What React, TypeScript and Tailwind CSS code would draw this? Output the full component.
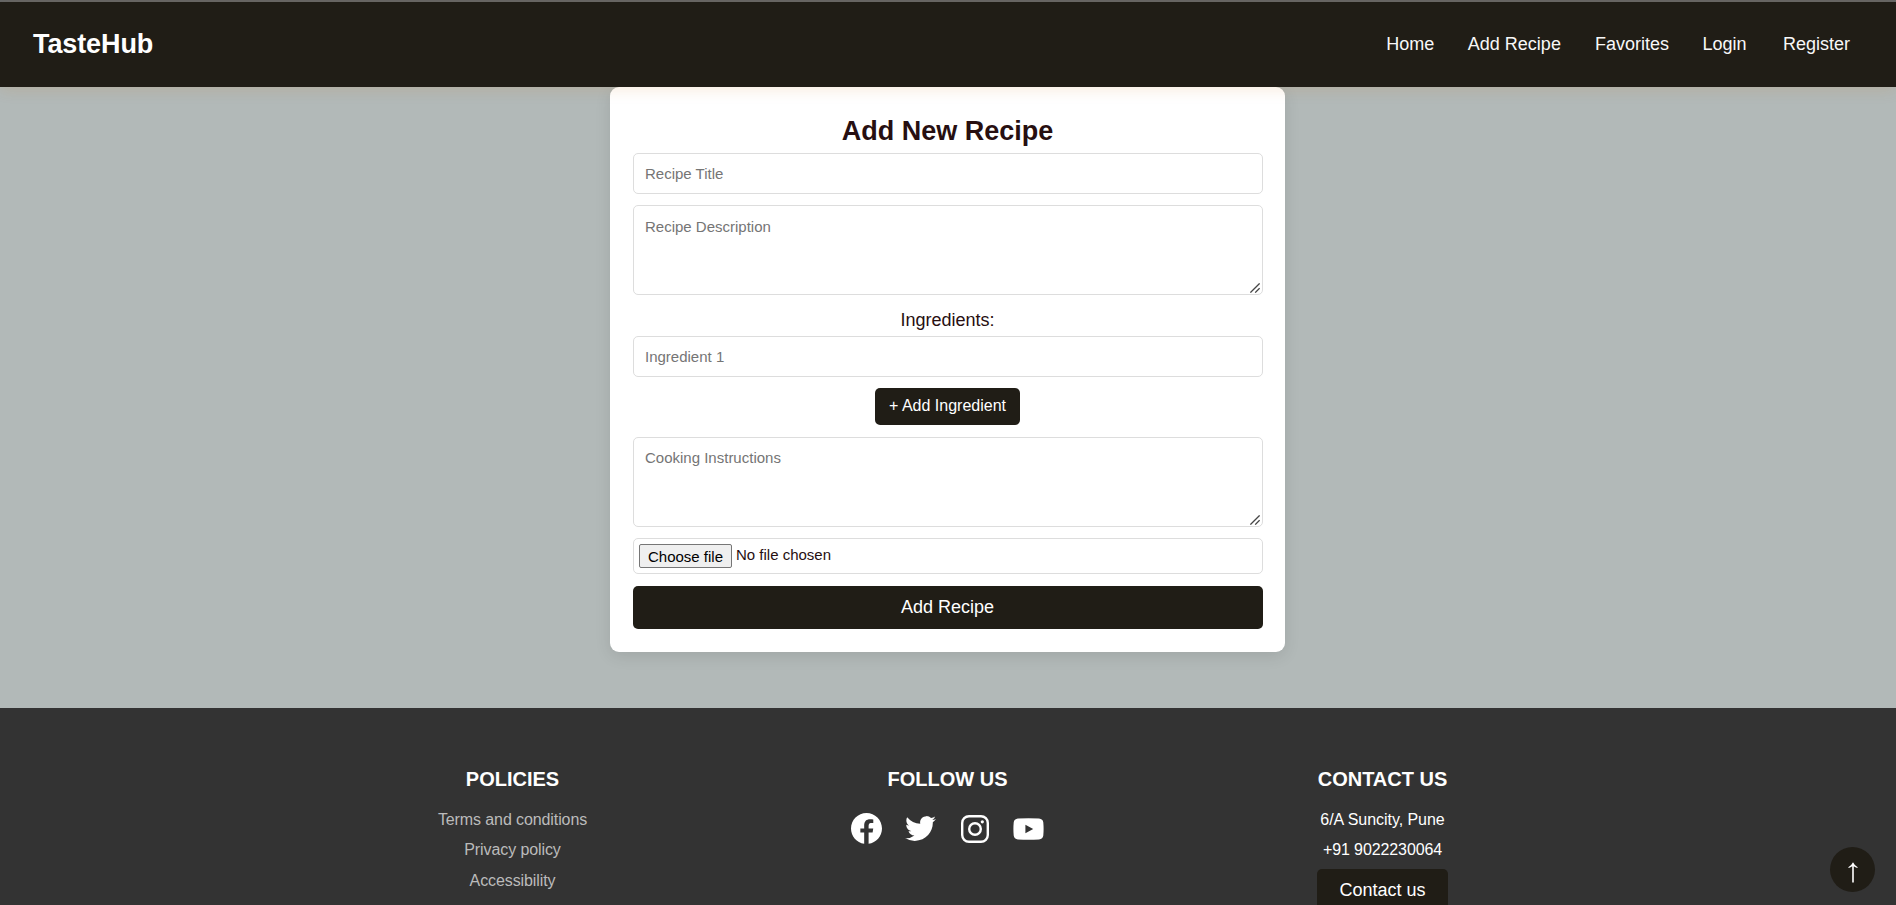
import React from "react";
import { IoLogoTwitter } from "react-icons/io5";

const field =
  "block w-full shrink-0 rounded-[5px] border border-[#dddddd] bg-white px-[11px] text-[15px] leading-[17px] text-[#270f11] placeholder:text-[#757575] outline-none";

function Header() {
  return (
    <header className="relative z-10 flex h-[85px] shrink-0 items-center justify-between bg-[#201d16] pr-[46px] pl-[33px] text-white shadow-[0_3px_14px_rgba(200,110,0,0.13)]">
      <div className="text-[27px] leading-[31px] font-bold tracking-[-0.1px]">TasteHub</div>
      <nav className="flex pb-px text-[18px] leading-[21px] text-[#f8f8f8]">
        <a className="mr-[33.5px]">Home</a>
        <a className="mr-[34px]">Add Recipe</a>
        <a className="mr-[33.5px]">Favorites</a>
        <a className="mr-[36.5px]">Login</a>
        <a>Register</a>
      </nav>
    </header>
  );
}

function TextBox({ placeholder, padding }: { placeholder: string; padding: string }) {
  return (
    <div className="relative w-full">
      <textarea
        className={`${field} h-[90px] resize-none ${padding}`}
        placeholder={placeholder}
      />
      <svg
        className="absolute right-[3px] bottom-[2px] size-[10px]"
        viewBox="0 0 10 10"
        fill="none"
        stroke="#454545"
        strokeWidth="1.3"
      >
        <path d="M0.4 9.6 9.6 0.4M5.2 9.6 9.6 5.2" />
      </svg>
    </div>
  );
}

function RecipeForm() {
  return (
    <form className="mx-auto flex h-[565px] w-[675px] flex-col items-center rounded-[9px] bg-white pt-[29px] pr-[22px] pl-[23px] text-[#270f11] shadow-[0_4px_16px_rgba(0,0,0,0.1)]">
      <h2 className="mr-px text-[27px] leading-[31px] font-bold">Add New Recipe</h2>
      <input className={`${field} mt-[6px] h-[41px]`} placeholder="Recipe Title" />
      <div className="mt-[11px] w-full">
        <TextBox placeholder="Recipe Description" padding="py-[12px]" />
      </div>
      <h3 className="mt-[15px] mr-px text-[18px] leading-[21px]">Ingredients:</h3>
      <input className={`${field} mt-[5px] h-[41px]`} placeholder="Ingredient 1" />
      <button
        type="button"
        className="mt-[11px] mr-px h-[37px] w-[145px] shrink-0 rounded-[5px] bg-[#201d16] pb-px text-[16px] text-white"
      >
        + Add Ingredient
      </button>
      <div className="mt-[12px] w-full">
        <TextBox placeholder="Cooking Instructions" padding="py-[11px]" />
      </div>
      <div className="mt-[11px] flex h-[36px] w-full shrink-0 items-center rounded-[5px] border border-[#dddddd] pl-[5px] text-[15px]">
        <button
          type="button"
          className="mr-[4px] h-[24px] w-[93px] rounded-[2px] border border-[#767676] bg-[#efefef] pt-px leading-[20px] text-black"
        >
          Choose file
        </button>
        <span className="pb-px">No file chosen</span>
      </div>
      <button
        type="button"
        className="mt-[12px] h-[43px] w-full shrink-0 rounded-[5px] bg-[#201d16] pr-px pb-px text-[18px] text-white"
      >
        Add Recipe
      </button>
    </form>
  );
}

function FacebookIcon() {
  return (
    <svg className="size-[31px]" viewBox="3 3 44 44" fill="currentColor">
      <path d="M25 3C12.85 3 3 12.85 3 25c0 11.03 8.125 20.137 18.712 21.728V30.831h-5.443v-5.783h5.443v-3.848c0-6.371 3.104-9.168 8.399-9.168 2.536 0 3.877.188 4.512.274v5.048h-3.612c-2.248 0-3.033 2.131-3.033 4.533v3.161h6.588l-.894 5.783h-5.694v15.944C38.716 45.318 47 36.137 47 25 47 12.85 37.15 3 25 3z" />
    </svg>
  );
}

function InstagramIcon() {
  return (
    <svg className="size-[28px]" viewBox="0 0 28 28" fill="none" stroke="currentColor" strokeWidth="2.4">
      <rect x="1.2" y="1.2" width="25.6" height="25.6" rx="6.8" />
      <circle cx="14" cy="14" r="5.8" />
      <circle cx="21.3" cy="6.8" r="1.6" fill="currentColor" stroke="none" />
    </svg>
  );
}

function YoutubeIcon() {
  return (
    <svg className="h-[22px] w-[31px]" viewBox="0 0 31 22" fill="currentColor" fillRule="evenodd">
      <path d="M5 .6Q15.5-.2 26 .6 29.9 1 30.3 4.5 30.9 11 30.3 17.5 29.9 21 26 21.4 15.5 22.2 5 21.4 1.1 21 .7 17.5.1 11 .7 4.5 1.1 1 5 .6ZM12.4 6.8V15.2L20.2 11Z" />
    </svg>
  );
}

function Footer() {
  return (
    <footer className="flex h-[197px] shrink-0 justify-center overflow-hidden bg-[#333333] pt-[60px] pr-px text-[16px] leading-[18px] text-white">
      <section className="flex w-[435px] flex-col items-center">
        <h3 className="text-[20px] leading-[23px] font-bold">POLICIES</h3>
        <div className="mt-[20px] flex flex-col items-center tracking-[-0.1px] text-[#bbbbbb]">
          <a>Terms and conditions</a>
          <a className="mt-[12px]">Privacy policy</a>
          <a className="mt-[13px]">Accessibility</a>
        </div>
      </section>
      <section className="flex w-[435px] flex-col items-center">
        <h3 className="text-[20px] leading-[23px] font-bold">FOLLOW US</h3>
        <div className="mt-[22px] flex h-[31px] items-center">
          <div className="flex w-[54px] justify-center"><FacebookIcon /></div>
          <div className="flex w-[54px] justify-center"><IoLogoTwitter className="size-[33px]" /></div>
          <div className="flex w-[54px] justify-center"><InstagramIcon /></div>
          <div className="flex w-[54px] justify-center"><YoutubeIcon /></div>
        </div>
      </section>
      <section className="flex w-[435px] flex-col items-center">
        <h3 className="text-[20px] leading-[23px] font-bold">CONTACT US</h3>
        <p className="mt-[20px] tracking-[-0.05px]">6/A Suncity, Pune</p>
        <p className="mt-[12px] tracking-[-0.1px]">+91 9022230064</p>
        <button
          type="button"
          className="mt-[10px] h-[43px] w-[131px] shrink-0 rounded-[5px] bg-[#201d16] pb-px text-[18px]"
        >
          Contact us
        </button>
      </section>
    </footer>
  );
}

export default function App() {
  return (
    <div className="relative flex h-[905px] flex-col overflow-hidden bg-[#b2b9b8] font-['Liberation_Sans',Arial,sans-serif]">
      <div className="h-[2px] shrink-0 bg-[#636566]" />
      <Header />
      <main className="h-[621px] shrink-0 pr-px">
        <RecipeForm />
      </main>
      <Footer />
      <button
        type="button"
        aria-label="Back to top"
        className="absolute right-[21px] bottom-[13px] flex size-[45px] items-center justify-center rounded-full bg-[#201d16] pt-[6px] text-white"
      >
        <svg className="h-[21px] w-[10px]" viewBox="0 0 10 21" fill="currentColor">
          <path d="M5 0.3 Q6.5 3.6 9.7 5.2 L9.3 6.1 Q7.3 5.4 5.8 4.2 V20.5 H4.2 V4.2 Q2.7 5.4 .7 6.1 L.3 5.2 Q3.5 3.6 5 .3Z" />
        </svg>
      </button>
    </div>
  );
}
